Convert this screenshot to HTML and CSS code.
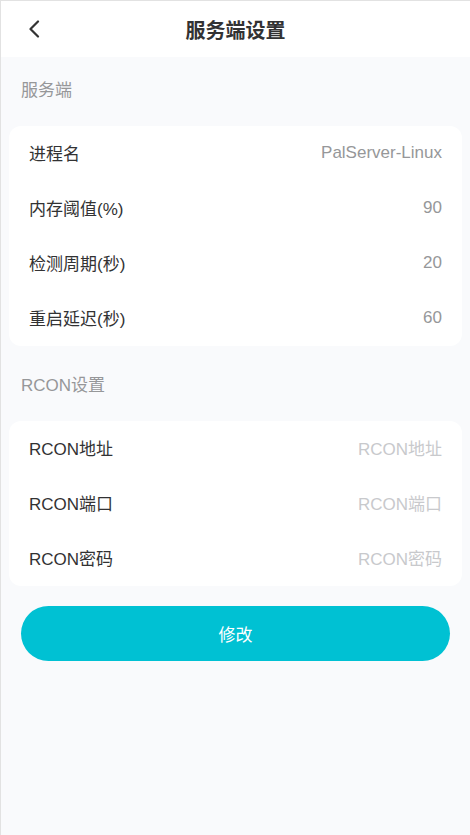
FILE: index.html
```html
<!DOCTYPE html>
<html lang="zh-CN">
<head>
<meta charset="utf-8">
<title>服务端设置</title>
<link rel="stylesheet" href="styles.css">
</head>
<body>
<div class="page">
  <header class="navbar">
    <div class="nav-left">
      <svg class="back" width="12" height="18" viewBox="0 0 12 18"><path d="M10 1.5 L2.5 9 L10 16.5" fill="none" stroke="#333" stroke-width="2.2" stroke-linecap="round" stroke-linejoin="round"/></svg>
    </div>
    <div class="nav-title">服务端设置</div>
    <div class="nav-right"></div>
  </header>

  <div class="section-title">服务端</div>
  <div class="card">
    <div class="row"><span class="label">进程名</span><span class="value">PalServer-Linux</span></div>
    <div class="row"><span class="label">内存阈值(%)</span><span class="value">90</span></div>
    <div class="row"><span class="label">检测周期(秒)</span><span class="value">20</span></div>
    <div class="row"><span class="label">重启延迟(秒)</span><span class="value">60</span></div>
  </div>

  <div class="section-title">RCON设置</div>
  <div class="card">
    <div class="row"><span class="label">RCON地址</span><span class="value placeholder">RCON地址</span></div>
    <div class="row"><span class="label">RCON端口</span><span class="value placeholder">RCON端口</span></div>
    <div class="row"><span class="label">RCON密码</span><span class="value placeholder">RCON密码</span></div>
  </div>

  <button class="submit">修改</button>
</div>
</body>
</html>
```

FILE: styles.css
```css
* { box-sizing: border-box; }
html, body { margin: 0; padding: 0; }
body {
  font-family: "Liberation Sans", "Noto Sans CJK SC", sans-serif;
  background: #f9fafc;
}
.page {
  min-height: 835px;
  border-top: 1px solid #e2e2e2;
  border-left: 1px solid #e2e2e2;
  background: #f9fafc;
  display: flex;
  flex-direction: column;
}
.navbar {
  height: 56px;
  background: #fff;
  display: grid;
  grid-template-columns: 60px 1fr 60px;
  align-items: center;
}
.nav-left {
  display: flex;
  align-items: center;
  padding-left: 27px;
}
.back { display: block; }
.nav-title {
  text-align: center;
  font-size: 20px;
  font-weight: 700;
  color: #323233;
}
.section-title {
  padding: 22px 20px 23px;
  font-size: 17px;
  line-height: 24px;
  color: #969799;
}
.card {
  margin: 0 8px 6px;
  background: #fff;
  border-radius: 12px;
}
.row {
  height: 55px;
  padding: 0 20px 2px;
  display: flex;
  align-items: center;
  justify-content: space-between;
  font-size: 17px;
}
.label { color: #323233; }
.value { color: #969799; }
.value.placeholder { color: #c8c9cc; }
.submit {
  margin: 14px 20px 0;
  height: 55px;
  border: none;
  border-radius: 28px;
  background: #00c1d3;
  color: #fff;
  font-family: inherit;
  font-size: 17px;
  padding-bottom: 2px;
}
```
